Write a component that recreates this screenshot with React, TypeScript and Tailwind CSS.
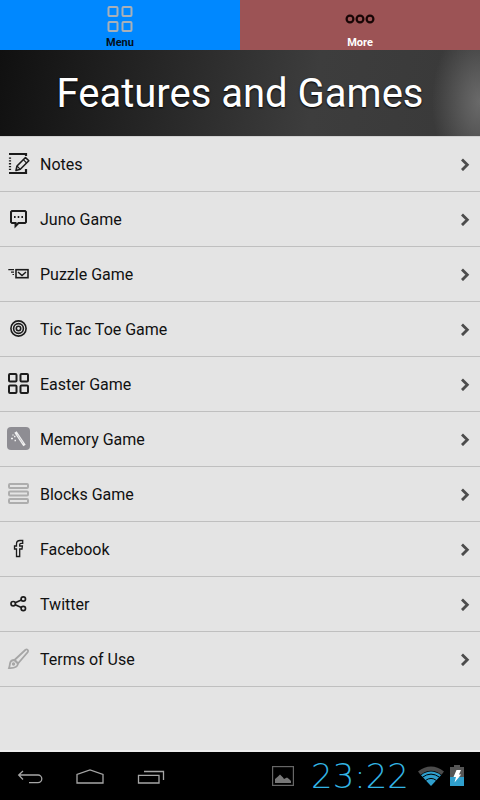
import React from 'react';

interface MenuEntry {
  label: string;
  icon: React.ReactNode;
}

const iconProps = {
  viewBox: '0 0 24 24',
  fill: 'none',
  stroke: '#1c1c1c',
  className: 'w-6 h-6 shrink-0',
  'aria-hidden': true,
};

const NotesIcon = () => (
  <svg {...iconProps}>
    <path d="M3 2h17v2M3 21h17v-4" strokeWidth="2.2" />
    <path d="M4 5.5v14" strokeWidth="2.2" strokeDasharray="1.3 1.5" />
    <path d="M10 18.5l1-4.5 8.5-8.5 3.3 3.3-8.5 8.5z" strokeWidth="1.6" strokeLinejoin="round" />
    <path d="M17.3 7.7l3.3 3.3M11 14l3.3 3.3" strokeWidth="1.1" />
  </svg>
);

const ChatIcon = () => (
  <svg {...iconProps}>
    <path d="M6 4h13l1 1v10l-1 1h-6.5l-3 3v-3H6l-1-1V5z" strokeWidth="2" />
    <path d="M8 10h1.6M11.7 10h1.6M15.4 10H17" strokeWidth="1.8" />
  </svg>
);

const MailIcon = () => (
  <svg {...iconProps}>
    <rect x="10" y="7.7" width="12" height="8" strokeWidth="1.6" />
    <path d="M12 10l4 3.5 4-3.5" strokeWidth="1.5" />
    <path d="M2.3 7.7H8M5 10.2h3M6.5 12.5H8" strokeWidth="1.2" />
  </svg>
);

const TargetIcon = () => (
  <svg {...iconProps} strokeWidth="1.6">
    <circle cx="12.5" cy="11.5" r="7.6" />
    <circle cx="12.5" cy="11.5" r="4.9" />
    <circle cx="12.5" cy="11.5" r="2.2" />
  </svg>
);

const GridIcon = () => (
  <svg {...iconProps} strokeWidth="2">
    <rect x="3" y="2" width="7.5" height="7.5" rx="1" />
    <rect x="14.5" y="2" width="7.5" height="7.5" rx="1" />
    <rect x="3" y="13.5" width="7.5" height="7.5" rx="1" />
    <rect x="14.5" y="13.5" width="7.5" height="7.5" rx="1" />
  </svg>
);

const WandIcon = () => (
  <svg {...iconProps}>
    <rect x="1" y="0" width="23" height="23" rx="4" fill="#8e8d93" stroke="none" />
    <path d="M9.5 5l9 13.5" stroke="#f2f2f2" strokeWidth="2.8" />
    <path d="M11.2 7.5l6 9" stroke="#b9b8bd" strokeWidth=".7" />
    <path d="M5 11.5h2M8 9.5h1.5M8.5 13.5H10M6.5 8h1" stroke="#f2f2f2" strokeWidth="1.5" />
  </svg>
);

const BlocksIcon = () => (
  <svg {...iconProps} stroke="#adadad" strokeWidth="2">
    <rect x="3" y="2" width="19" height="4" rx="1" />
    <rect x="3" y="9.5" width="19" height="4" rx="1" />
    <rect x="3" y="17" width="19" height="4" rx="1" />
  </svg>
);

const FacebookIcon = () => (
  <svg {...iconProps}>
    <path
      d="M10.5 19.5V12h-2V9h2V7c0-2.3 1.5-3.5 3.5-3.5h2.7v2.8H15c-.9 0-1.3.4-1.3 1.2V9h2.7l-.4 3h-2.3v7.5z"
      strokeWidth="1.3"
    />
  </svg>
);

const ShareIcon = () => (
  <svg {...iconProps} strokeWidth="1.7">
    <circle cx="7.2" cy="11.7" r="2.2" />
    <circle cx="17.3" cy="7" r="2.2" />
    <circle cx="17.3" cy="16.5" r="2.2" />
    <path d="M9.2 10.7l6.1-2.8M9.2 12.7l6.1 2.8" />
  </svg>
);

const BrushIcon = () => (
  <svg {...iconProps} stroke="#a6a6a6" strokeWidth="1.8">
    <path d="M8.5 13L19.5 2.8c1.600-1 3.300.5 2.300 2.200L12 16.500z" />
    <path d="M8.500 13c-2.500 0-4.200 1.500-4.500 3.500-.2 1.700-.5 3.200-1 4.500 3.500.2 8.500 0 9-4.500z" />
    <circle cx="7.5" cy="17" r=".8" />
  </svg>
);

const entries: MenuEntry[] = [
  { label: 'Notes', icon: <NotesIcon /> },
  { label: 'Juno Game', icon: <ChatIcon /> },
  { label: 'Puzzle Game', icon: <MailIcon /> },
  { label: 'Tic Tac Toe Game', icon: <TargetIcon /> },
  { label: 'Easter Game', icon: <GridIcon /> },
  { label: 'Memory Game', icon: <WandIcon /> },
  { label: 'Blocks Game', icon: <BlocksIcon /> },
  { label: 'Facebook', icon: <FacebookIcon /> },
  { label: 'Twitter', icon: <ShareIcon /> },
  { label: 'Terms of Use', icon: <BrushIcon /> },
];

const TopTabs = () => (
  <nav className="grid grid-cols-2 h-[50px] text-[11px] leading-4 font-bold">
    <button className="flex flex-col items-center pt-1.5 bg-[#0088ff] text-[#04101c]">
      <svg viewBox="0 0 26 26" className="w-[26px] h-[26px] mb-[3px]" fill="none" stroke="#a9b0b8" strokeWidth="2">
        <rect x="1.5" y="1" width="9" height="9" rx="1" />
        <rect x="15.5" y="1" width="9" height="9" rx="1" />
        <rect x="1.5" y="16" width="9" height="9" rx="1" />
        <rect x="15.5" y="16" width="9" height="9" rx="1" />
      </svg>
      Menu
    </button>
    <button className="flex flex-col items-center pt-1.5 bg-[#9c5355] text-white">
      <svg viewBox="0 0 32 26" className="w-8 h-[26px] mb-[3px]" fill="none" stroke="#180606" strokeWidth="2.2">
        <circle cx="6" cy="13" r="3.4" />
        <circle cx="16" cy="13" r="3.4" />
        <circle cx="26" cy="13" r="3.4" />
      </svg>
      More
    </button>
  </nav>
);

const EntryList = () => (
  <ul>
    {entries.map((entry) => (
      <li key={entry.label} className="border-b border-[#bfbfbf]">
        <a href="#" className="flex items-center gap-2.5 h-[54px] pl-1.5 pr-2.5 text-base text-[#111111]">
          {entry.icon}
          <span className="flex-1 pt-0.5">{entry.label}</span>
          <svg viewBox="0 0 10 14" className="w-2.5 h-3.5" fill="none" stroke="#4c4c4c" strokeWidth="2.8">
            <path d="M2 2.5l5.3 5.3L2 13.1" />
          </svg>
        </a>
      </li>
    ))}
  </ul>
);

const SystemBar = () => (
  <footer className="flex items-center h-12 bg-black pr-4">
    <button aria-label="Back" className="w-15 flex justify-center">
      <svg viewBox="0 0 30 20" className="w-[30px] h-5" fill="none" stroke="#a6a6a6" strokeWidth="1.3">
        <path d="M3.5 9H23a3.8 3.8 0 0 1 0 7.6h-9M8 5L3.7 9 8 13.5" />
      </svg>
    </button>
    <button aria-label="Home" className="w-15 flex justify-center">
      <svg viewBox="0 0 30 20" className="w-[30px] h-5" fill="none" stroke="#a6a6a6" strokeWidth="1.3">
        <path d="M2 17V8.500L15 4l13 4.500V17z" />
      </svg>
    </button>
    <button aria-label="Recent apps" className="w-15 flex justify-center">
      <svg viewBox="0 0 30 20" className="w-[30px] h-5" fill="none" stroke="#a6a6a6" strokeWidth="1.3">
        <path d="M3.5 9.3H24V17H3.5zM9 5.5h19.5V14" />
      </svg>
    </button>
    <div className="flex items-center ml-auto">
      <svg viewBox="0 0 22 20" className="w-[22px] h-5" fill="none" stroke="#666666">
        <rect x=".6" y=".6" width="20.8" height="18.8" strokeWidth="1.2" />
        <path d="M3 17v-4l3-2.500 2-2 3 3 1 1.500 3-1.500 2 1.500 2 2V17z" fill="#777777" stroke="none" />
      </svg>
      <time className="w-[124px] pl-2 text-center font-['DejaVu_Sans',sans-serif] font-extralight text-[34px] leading-10 text-[#33b5e5]">
        23:22
      </time>
      <svg viewBox="0 0 26 20" className="w-[26px] h-5 mr-1.5" fill="none">
        <path d="M0 5.500Q13-4.500 26 5.500L23.500 8.700Q13 1 2.500 8.700z" fill="#4b4b4b" />
        <path d="M3 9.300Q13 1.800 23 9.300L13 20z" fill="#2f9fcd" />
        <path d="M4.500 11.200Q13 5 21.500 11.200M7.500 14.500Q13 10.300 18.500 14.500" stroke="#000000" strokeWidth="1" />
      </svg>
      <svg viewBox="0 0 14 22" className="w-3.5 h-[22px]">
        <path d="M4 0h6v2h4v10H0V2h4z" fill="#555555" />
        <path d="M0 12h14v9H0z" fill="#2f9fcd" />
        <path d="M6.5 5H11L9 9.500h2.200L4.500 17.500 6 12H3.500z" fill="#ffffff" />
      </svg>
    </div>
  </footer>
);

const App: React.FC = () => {
  return (
    <div className="min-h-screen flex flex-col bg-[#e4e4e4] font-['Roboto',sans-serif]">
      <TopTabs />
      <header className="flex items-center justify-center h-[87px] pt-0.5 border-b border-[#d0d0d0] bg-[radial-gradient(ellipse_48px_80px_at_100%_60%,#6a6a6a,#5a5a5a_35%,transparent),linear-gradient(100deg,#101010_0%,#2b2b2b_40%,#3d3d3d_65%,#393939_100%)]">
        <h1 className="text-[40px] leading-none text-white [text-shadow:0_1px_2px_#000000]">Features and Games</h1>
      </header>
      <main className="flex-1 border-b-2 border-[#ededed]">
        <EntryList />
      </main>
      <SystemBar />
    </div>
  );
};

export default App;
